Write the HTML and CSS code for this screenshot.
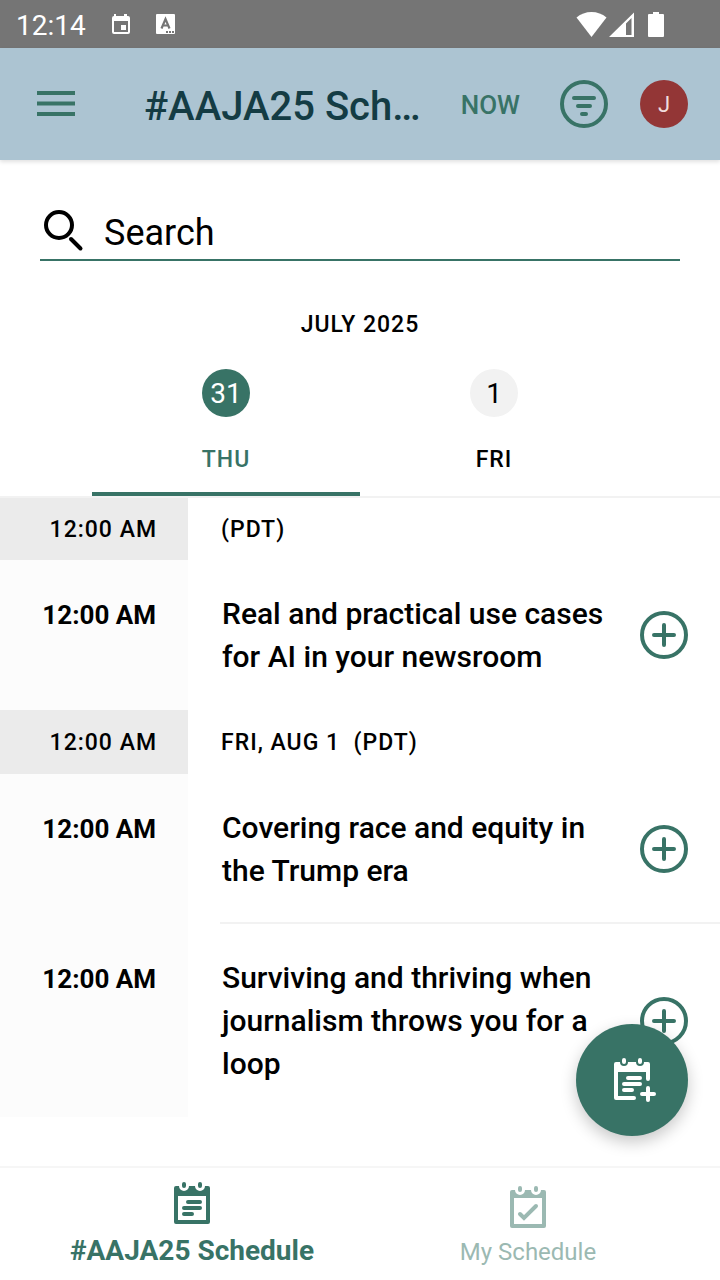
FILE: index.html
```
<!DOCTYPE html>
<html lang="en">
<head>
<meta charset="UTF-8" />
<meta name="viewport" content="width=device-width, initial-scale=1.0" />
<title>#AAJA25 Schedule</title>
<link rel="stylesheet" href="styles.css">
</head>
<body>

<div class="status-bar">
  <span class="clock">12:14</span>
  <svg class="status-event" width="20" height="22" viewBox="0 0 20 22">
    <path fill="#fff" fill-rule="evenodd" d="M3 1h2v2h8V1h3v2h1q2 0 2 2v14q0 2-2 2H3q-2 0-2-2V5q0-2 2-2zM3 8v11h14V8z"/>
    <path fill="#fff" d="M10 12h5v5h-5z"/>
  </svg>
  <svg class="status-app" width="20" height="22" viewBox="0 0 20 22">
    <rect x="0" y="1" width="19" height="20" rx="1" fill="#fff"/>
    <path d="M5.500 15.500 9.500 6l4 9.500M7 12.500h5" fill="none" stroke="#757575" stroke-width="2.200"/>
    <path d="M10 19h8" stroke="#757575" stroke-width="2" stroke-dasharray="2 1"/>
  </svg>
  <svg class="status-signal" width="88" height="28" viewBox="0 0 88 28">
    <path fill="#fff" d="M0.500 7.500Q7 2 15.500 2T30.500 7.500L15.500 27z"/>
    <path fill="#fff" fill-rule="evenodd" d="M33 27 58 2.500V27zM50 13.500V25h5.500V8z"/>
    <path fill="#fff" d="M77 2h6v2h4q1 0 1 1v21q0 1-1 1H73q-1 0-1-1V5q0-1 1-1h4z"/>
  </svg>
</div>

<header class="app-bar">
  <button class="icon-btn" aria-label="Menu">
    <svg width="48" height="48" viewBox="0 0 48 48"><path d="M5 13h38M5 23.500h38M5 34h38" stroke="#387366" stroke-width="4"/></svg>
  </button>
  <h1>#AAJA25 Schedule</h1>
  <button class="now-btn">NOW</button>
  <button class="icon-btn filter-btn" aria-label="Filter">
    <svg width="48" height="48" viewBox="0 0 48 48" fill="none" stroke="#387366" stroke-width="4" stroke-linecap="round">
      <circle cx="24" cy="24" r="22"/>
      <path d="M14 18h20M18 26h12M22 34h4"/>
    </svg>
  </button>
  <button class="avatar" aria-label="Profile">J</button>
</header>

<main>
  <div class="search">
    <label for="search" aria-label="Search">
      <svg width="48" height="48" viewBox="0 0 48 48" fill="none" stroke="#000" stroke-width="4">
        <circle cx="19" cy="17" r="13"/>
        <path d="M31 31l9.500 9.500" stroke-linecap="round"/>
      </svg>
    </label>
    <input type="text" id="search" placeholder="Search">
  </div>

  <h2 class="month">JULY 2025</h2>
  <div class="days">
    <button class="day active"><span class="num">31</span>THU</button>
    <button class="day"><span class="num">1</span>FRI</button>
  </div>

  <section class="schedule">
    <div class="row head">
      <div class="time">12:00 AM</div>
      <div class="label">(PDT)</div>
    </div>
    <div class="row">
      <div class="time">12:00 AM</div>
      <div class="session">
        <h3>Real and practical use cases for AI in your newsroom</h3>
        <button class="icon-btn" aria-label="Add session">
          <svg width="48" height="48" viewBox="0 0 48 48" fill="none" stroke="#387366" stroke-width="4" stroke-linecap="round"><circle cx="24" cy="24" r="22"/><path d="M14 24h20M24 14v20"/></svg>
        </button>
      </div>
    </div>
    <div class="row head">
      <div class="time">12:00 AM</div>
      <div class="label">FRI, AUG 1 &nbsp;(PDT)</div>
    </div>
    <div class="row">
      <div class="time">12:00 AM</div>
      <div class="session divided">
        <h3>Covering race and equity in the Trump era</h3>
        <button class="icon-btn" aria-label="Add session">
          <svg width="48" height="48" viewBox="0 0 48 48" fill="none" stroke="#387366" stroke-width="4" stroke-linecap="round"><circle cx="24" cy="24" r="22"/><path d="M14 24h20M24 14v20"/></svg>
        </button>
      </div>
    </div>
    <div class="row">
      <div class="time">12:00 AM</div>
      <div class="session">
        <h3>Surviving and thriving when journalism throws you for a loop</h3>
        <button class="icon-btn" aria-label="Add session">
          <svg width="48" height="48" viewBox="0 0 48 48" fill="none" stroke="#387366" stroke-width="4" stroke-linecap="round"><circle cx="24" cy="24" r="22"/><path d="M14 24h20M24 14v20"/></svg>
        </button>
      </div>
    </div>
  </section>
</main>

<button class="fab" aria-label="Add to schedule">
  <svg width="48" height="48" viewBox="0 0 48 48">
    <path fill="#fff" d="M8 6h4a4 4 0 0 0 8 0h8a4 4 0 0 0 8 0h4q2 0 2 2v15q0 2-2 2t-2-2v-7H10v24h16q2 0 2 2t-2 2H8q-2 0-2-2V8q0-2 2-2z"/>
    <path d="M16 4v2M32 4v2M20 22h12M16 28h16M16 34h8M40 32v12M34 38h12" stroke="#fff" stroke-width="4" stroke-linecap="round"/>
  </svg>
</button>

<nav class="bottom-nav">
  <a href="#schedule" class="active">
    <svg width="48" height="48" viewBox="0 0 48 48">
      <path fill="#387366" fill-rule="evenodd" d="M8 6h3a5 5 0 0 0 10 0h6a5 5 0 0 0 10 0h3q2 0 2 2v34q0 2-2 2H8q-2 0-2-2V8q0-2 2-2zM10 16v24h28V16z"/>
      <path d="M16 4v2M32 4v2M20 22h12M16 28h16M16 34h8" stroke="#387366" stroke-width="4" stroke-linecap="round"/>
    </svg>
    #AAJA25 Schedule
  </a>
  <a href="#mine">
    <svg width="48" height="48" viewBox="0 0 48 48">
      <path fill="#9bb9b2" fill-rule="evenodd" d="M8 6h3a5 5 0 0 0 10 0h6a5 5 0 0 0 10 0h3q2 0 2 2v34q0 2-2 2H8q-2 0-2-2V8q0-2 2-2zM10 14v26h28V14z"/>
      <path d="M16 4v2M32 4v2M16 30l4 4 12-12" fill="none" stroke="#9bb9b2" stroke-width="4" stroke-linecap="round"/>
    </svg>
    My Schedule
  </a>
</nav>

</body>
</html>
```
FILE: styles.css
```
* { box-sizing: border-box; }
body {
  margin: 0; min-height: 100vh; display: flex; flex-direction: column;
  background: #fff; color: #000; font-family: Roboto, "Liberation Sans", sans-serif;
}
h1, h2, h3 { margin: 0; font-weight: 500; }
svg { display: block; flex-shrink: 0; }
button { border: none; background: none; padding: 0; font-family: inherit; color: inherit; cursor: pointer; }
main { flex: 1; }

.status-bar { display: flex; align-items: center; height: 48px; padding: 0 56px 0 16px; background: #757575; color: #fff; }
.clock { font-size: 28px; line-height: 48px; padding-top: 4px; }
.status-event { margin-left: 25px; }
.status-app { margin-left: 25px; }
.status-signal { margin-left: auto; }

.app-bar {
  display: flex; align-items: center; height: 112px; padding: 0 32px;
  background: #acc4d2; box-shadow: 0 2px 4px rgba(0,0,0,0.12);
}
.icon-btn { width: 48px; height: 48px; flex-shrink: 0; }
.app-bar h1 {
  flex: 1; min-width: 0; margin: 0 32px 0 64px; padding-top: 6px; font-size: 40px; line-height: 56px; color: #143c44;
  white-space: nowrap; overflow: hidden; text-overflow: ellipsis;
}
.now-btn { padding-top: 2px; font-size: 26px; font-weight: 500; line-height: 48px; color: #387366; }
.filter-btn { margin: 0 32px 0 40px; }
.avatar { width: 48px; height: 48px; border-radius: 50%; background: #933636; color: #f0dcdc; font-size: 22px; }

.search { display: flex; align-items: flex-start; margin: 48px 40px 0; height: 53px; border-bottom: 2px solid #387366; }
.search input {
  flex: 1; min-width: 0; height: 49px; border: none; outline: none; padding: 0; margin-left: 16px;
  background: none; font-family: inherit; font-size: 36px; line-height: 48px; color: #000;
}
.search input::placeholder { color: #000; opacity: 1; }

.month { margin-top: 48px; text-align: center; font-size: 23px; line-height: 32px; letter-spacing: 1px; }
.days { display: flex; max-width: 536px; margin: 28px auto 0; }
.day {
  flex: 1; display: flex; flex-direction: column; align-items: center; gap: 27px; height: 127px;
  border-bottom: 4px solid transparent; font-size: 23px; font-weight: 500; line-height: 32px; letter-spacing: 1px;
}
.day.active { border-color: #387366; color: #387366; }
.num {
  width: 48px; height: 48px; border-radius: 50%; background: #f2f2f2;
  font-size: 28px; font-weight: 400; line-height: 50px; letter-spacing: 0; text-align: center;
}
.active .num { background: #387366; color: #fff; }

.schedule { border-top: 2px solid #f2f2f2; }
.row { display: flex; }
.time {
  width: 188px; flex-shrink: 0; padding: 34px 32px 0 0; background: #fcfcfc;
  font-size: 26px; font-weight: 700; line-height: 43px; text-align: right;
}
.head { font-size: 23px; font-weight: 500; letter-spacing: 1px; height: 64px; line-height: 66px; }
.head:first-child { height: 62px; line-height: 64px; }
.head .time { background: #ebebeb; padding-top: 0; padding-right: 31px; font-size: 23px; font-weight: 500; line-height: inherit; }
.head .label { margin-left: 33px; }
.session { flex: 1; display: flex; align-items: center; gap: 24px; margin-left: 32px; padding: 32px 32px 32px 2px; }
.session.divided { border-bottom: 2px solid #f2f2f2; padding-bottom: 30px; }
.session h3 { flex: 1; font-size: 30px; line-height: 43px; }

.fab {
  position: fixed; right: 32px; bottom: 144px; width: 112px; height: 112px; border-radius: 50%;
  display: flex; align-items: center; justify-content: center;
  background: #387366; box-shadow: 0 6px 16px rgba(0,0,0,0.22);
}

.bottom-nav {
  position: sticky; bottom: 0; display: flex; height: 114px; padding: 0 24px;
  background: #fff; border-top: 2px solid #f6f6f6;
}
.bottom-nav a {
  flex: 1; display: flex; flex-direction: column; align-items: center; padding-top: 16px;
  color: #9bb9b2; font-size: 24px; line-height: 40px; text-decoration: none;
}
.bottom-nav a.active { gap: 3px; padding-top: 12px; color: #387366; font-size: 28px; font-weight: 700; }
```
